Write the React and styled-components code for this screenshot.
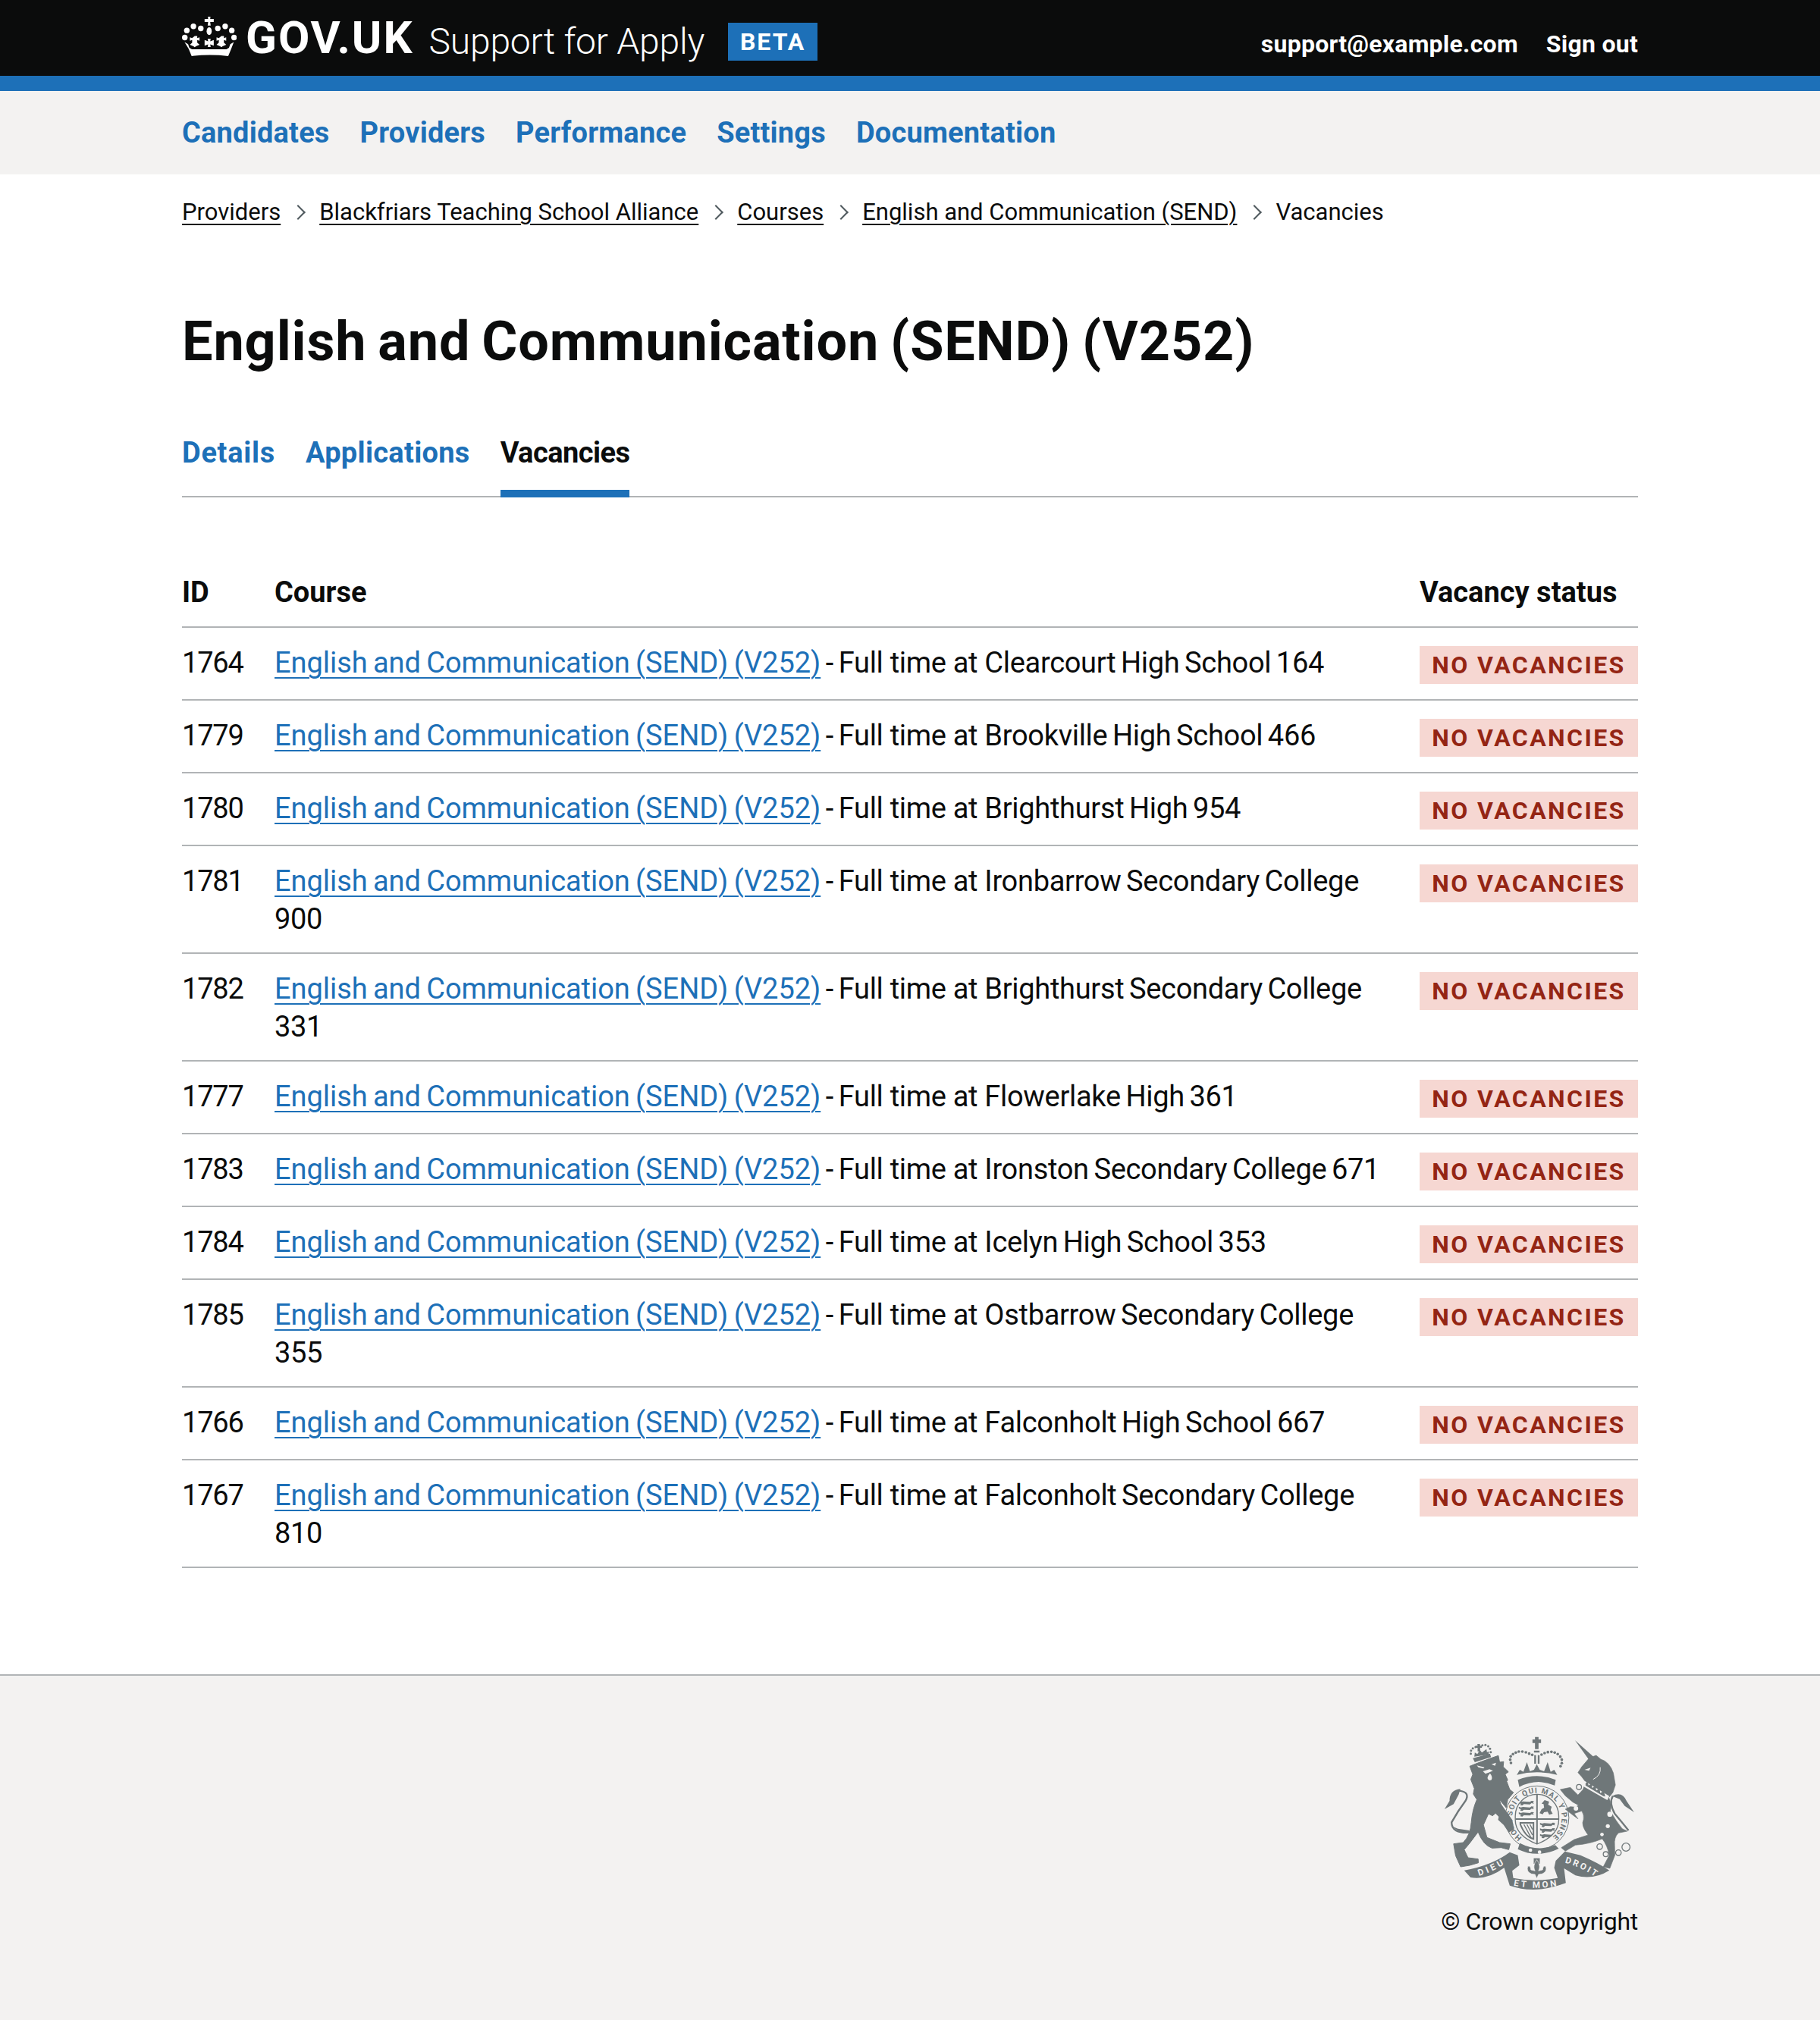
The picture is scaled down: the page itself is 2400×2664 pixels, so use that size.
import React from "react";
import styled, { createGlobalStyle } from "styled-components";

const FONT = `Roboto, "Liberation Sans", Arial, sans-serif`;
const CREST = "#6f7779";
const PAPER = "#f3f2f1";

const GlobalStyle = createGlobalStyle`
  html, body { margin: 0; padding: 0; background: #fff; }
  body { font-family: ${FONT}; color: #0b0c0c; }
`;

const Page = styled.div`
  min-height: 100vh;
  display: flex;
  flex-direction: column;
`;

const Container = styled.div`
  width: 1920px;
  margin: 0 auto;
`;

const Masthead = styled.header`
  background: #0b0c0c;
  border-bottom: 20px solid #1d70b8;
`;

const MastheadInner = styled(Container)`
  height: 100px;
  display: flex;
  justify-content: space-between;
  align-items: flex-start;
`;

const Brand = styled.div`
  display: flex;
  align-items: flex-start;
`;

const Crown = styled.svg`
  width: 72px;
  height: 52px;
  margin-top: 22px;
  margin-right: 12px;
  fill: #fff;
`;

const Logotype = styled.span`
  color: #fff;
  font-size: 60px;
  font-weight: 700;
  letter-spacing: 2px;
  line-height: 100px;
`;

const ServiceName = styled.span`
  color: #fff;
  font-size: 48px;
  font-weight: 300;
  letter-spacing: -0.2px;
  line-height: 100px;
  margin-left: 20px;
  margin-top: 5px;
`;

const PhaseTag = styled.strong`
  background: #1d70b8;
  color: #fff;
  font-size: 32px;
  font-weight: 700;
  letter-spacing: 2px;
  line-height: 50px;
  width: 118px;
  text-align: center;
  margin-top: 30px;
  margin-left: 31px;
`;

const AccountLinks = styled.nav`
  display: flex;
  gap: 37px;
  padding-top: 38px;
`;

const AccountLink = styled.a`
  color: #fff;
  font-size: 32px;
  font-weight: 700;
  letter-spacing: 0.25px;
  line-height: 40px;
`;

const PrimaryNav = styled.nav`
  background: #f3f2f1;
  height: 110px;
`;

const PrimaryNavInner = styled(Container)`
  display: flex;
  gap: 40px;
  height: 110px;
  align-items: center;
`;

const NavLink = styled.a`
  color: #1d70b8;
  font-size: 38px;
  font-weight: 700;
  letter-spacing: 0.2px;
  line-height: 50px;
`;

const Breadcrumbs = styled.ol`
  list-style: none;
  display: flex;
  align-items: center;
  margin: 30px 0 0;
  padding: 0;
  font-size: 31px;
  line-height: 40px;
`;

const Crumb = styled.li`
  display: flex;
  align-items: center;
`;

const CrumbLink = styled.a`
  color: #0b0c0c;
  text-decoration: underline;
  text-decoration-thickness: 2px;
  text-underline-offset: 5px;
`;

const Chevron = styled.span`
  width: 12px;
  height: 12px;
  border-top: 2px solid #505a5f;
  border-right: 2px solid #505a5f;
  transform: rotate(45deg);
  margin: 0 21px 0 16px;
`;

const Heading = styled.h1`
  margin: 111px 0 0;
  font-size: 72px;
  font-weight: 700;
  letter-spacing: 0.88px;
  word-spacing: -4px;
  line-height: 80px;
`;

const Tabs = styled.div`
  display: flex;
  gap: 40px;
  margin-top: 81px;
  border-bottom: 2px solid #b1b4b6;
  height: 82px;
`;

const Tab = styled.a`
  font-size: 38px;
  font-weight: 700;
  line-height: 50px;
  letter-spacing: ${(p) => p.$spacing};
  height: 74px;
  color: ${(p) => (p.$active ? "#0b0c0c" : "#1d70b8")};
  border-bottom: 10px solid ${(p) => (p.$active ? "#1d70b8" : "transparent")};
`;

const Table = styled.table`
  width: 100%;
  table-layout: fixed;
  border-collapse: collapse;
  margin-top: 80px;
  margin-bottom: 140px;
  font-size: 38px;
  line-height: 50px;
`;

const Th = styled.th`
  text-align: left;
  font-weight: 700;
  padding: 20px 0;
  border-bottom: 2px solid #b1b4b6;
  width: ${(p) => p.$width};
`;

const Td = styled.td`
  vertical-align: top;
  padding: 21px 40px 19px 0;
  border-bottom: 2px solid #b1b4b6;
  letter-spacing: -0.3px;
  word-spacing: -2.5px;
`;

const IdCell = styled(Td)`
  letter-spacing: -1.2px;
`;

const StatusCell = styled(Td)`
  padding: 20px 0;
`;

const CourseLink = styled.a`
  color: #1d70b8;
  letter-spacing: -0.05px;
  word-spacing: -2px;
  text-decoration: underline;
  text-decoration-thickness: 2px;
  text-underline-offset: 6px;
`;

const LeadIn = styled.span`
  word-spacing: 0;
`;

const StatusTag = styled.strong`
  display: block;
  margin-top: 4px;
  background: #f6d7d2;
  color: #942514;
  font-size: 32px;
  font-weight: 700;
  letter-spacing: 2.4px;
  word-spacing: 0;
  line-height: 50px;
  height: 50px;
  text-align: center;
  text-transform: uppercase;
  white-space: nowrap;
`;

const Footer = styled.footer`
  flex: 1;
  background: #f3f2f1;
  border-top: 2px solid #b1b4b6;
  padding-top: 80px;
`;

const FooterInner = styled(Container)`
  display: flex;
  justify-content: flex-end;
`;

const Licence = styled.div`
  display: flex;
  flex-direction: column;
  align-items: center;
`;

const CrestArt = styled.svg`
  width: 252px;
  height: 204px;
  display: block;
`;

const CrestText = styled.text`
  font-family: ${FONT};
  font-weight: 700;
  font-size: ${(p) => p.$size}px;
  fill: ${(p) => (p.$dark ? CREST : PAPER)};
`;

const Copyright = styled.a`
  margin-top: 20px;
  font-size: 32px;
  letter-spacing: -0.3px;
  line-height: 40px;
  color: #0b0c0c;
  white-space: nowrap;
`;

const crumbs = [
  "Providers",
  "Blackfriars Teaching School Alliance",
  "Courses",
  "English and Communication (SEND)",
];

const rows = [
  ["1764", "Clearcourt High School 164"],
  ["1779", "Brookville High School 466"],
  ["1780", "Brighthurst High 954"],
  ["1781", "Ironbarrow Secondary College 900"],
  ["1782", "Brighthurst Secondary College 331"],
  ["1777", "Flowerlake High 361"],
  ["1783", "Ironston Secondary College 671"],
  ["1784", "Icelyn High School 353"],
  ["1785", "Ostbarrow Secondary College 355"],
  ["1766", "Falconholt High School 667"],
  ["1767", "Falconholt Secondary College 810"],
];

function CrownLogo() {
  const dots = [
    [64, 89], [90, 73], [119, 81], [186, 81], [215, 73], [241, 89], [56, 117], [250, 117],
  ];
  const crossAt = (x, y) => `M${x - 5},${y - 24} h10 v8 l9,-3 v14 l-9,-3 v10 l9,8 l-14,6 l-5,4 l-5,-4 l-14,-6 l9,-8 v-10 l-9,3 v-14 l9,3 z`;
  return (
    <Crown viewBox="45 35 215 155">
      {dots.map(([x, y]) => (
        <circle key={`${x}-${y}`} cx={x} cy={y} r="11" />
      ))}
      <path d="M147,35 h10 l-1,9 h14 v12 h-14 l2,14 h-12 l2,-14 h-14 v-12 h14 z" />
      <ellipse cx="152" cy="92" rx="10" ry="15" />
      <path d={crossAt(100, 135)} />
      <path d="M146,122 h12 l-2,10 l14,-5 v22 l-14,-5 l2,10 h-12 l2,-10 l-14,5 v-22 l14,5 z" />
      <path d={crossAt(205, 135)} />
      <path d="M55,135 l14,8 l5,14 l10,6 h136 l10,-6 l5,-14 l14,-8 l-10,26 l-12,29 q-72,-8 -144,0 l-12,-29 z" />
    </Crown>
  );
}

function PassantLions({ x, y }) {
  const one = (dy) => `M${x},${y + dy} l8,3 l8,-2 l28,2 l6,-4 l10,1 l-4,5 l4,5 l-10,-2 l-6,5 l-24,-1 l-6,5 l-8,-1 l2,-6 l-8,-3 z`;
  return (
    <>
      <path d={one(0)} />
      <path d={one(22)} />
      <path d={one(44)} />
    </>
  );
}

function RoyalArms() {
  const shield = "M352,405 A86,86 0 0 1 524,405 L524,420 Q524,482 438,516 Q352,482 352,420 Z";
  const lionCrownDots = [[176, 158], [177, 146], [184, 137], [195, 132], [222, 125], [234, 124], [245, 129], [252, 139], [255, 152]];
  const arch = [
    [335, 195], [332, 182], [334, 169], [343, 160], [354, 154], [366, 150], [380, 150], [394, 153], [407, 158], [419, 163],
    [456, 162], [468, 156], [481, 152], [495, 151], [508, 154], [520, 160], [530, 170], [536, 182], [536, 196], [531, 208],
  ];
  return (
    <CrestArt viewBox="70 90 755 612" fill={CREST}>
      <defs>
        <path id="garterText" d="M379,490 A98,98 0 1 1 497,490" />
        <path id="scrollLeft" d="M208,642 Q265,625 318,590" />
        <path id="scrollMid" d="M345,680 Q435,698 528,680" />
        <path id="scrollRight" d="M548,590 Q610,605 668,646" />
        <clipPath id="shieldClip">
          <path d={shield} />
        </clipPath>
      </defs>

      {/* lion */}
      <path
        stroke={CREST}
        strokeWidth="3"
        strokeLinejoin="round"
        d="M172,208 Q215,190 285,166 L290,192 L306,190 L304,210 L325,230 L312,240 L322,262 L318,268 L330,300 L345,312 L322,340 L316,372 L288,338 L302,378 L318,405 L300,398 L290,410 L274,394 L262,404 L246,396 L226,440 L240,490 L290,510 L332,515 L326,538 L296,530 L260,532 Q225,520 205,468 L172,512 L150,538 L165,570 L205,575 L206,590 L172,600 L136,606 L116,562 L108,515 L146,510 Q175,480 178,430 Q182,380 200,340 L186,318 L190,296 L176,260 L184,240 Z"
      />
      <path d="M172,470 Q100,475 100,430 Q125,385 155,345 Q175,310 130,305" fill="none" stroke={CREST} strokeWidth="7" />
      <path d="M135,298 Q92,302 92,345 L72,378 L108,358 L128,320 Z" />
      <path d="M100,445 L135,470 L175,475 L170,462 L125,455 Z" />
      <path d="M252,236 Q264,250 258,262 Q246,268 242,254 Q244,244 252,236 Z" fill={PAPER} />
      <path d="M224,228 L250,220 L264,226 L250,232 L234,238 Z" fill={PAPER} />
      <path d="M200,205 L230,212 L226,217 L206,212 Z M258,200 L276,194 L272,206 Z" fill={PAPER} />

      {/* lion crown */}
      <path d="M184,176 L252,158 L256,172 L192,192 Z" />
      <path d="M190,170 L192,154 L202,160 L212,144 L220,154 L238,140 L240,152 L248,150 L246,162 Z" />
      <path d="M202,120 h10 l1,7 h7 v8 h-7 v14 h-10 v-14 h-7 v-8 h7 z" />
      {lionCrownDots.map(([x, y]) => (
        <circle key={`${x}-${y}`} cx={x} cy={y} r="4.5" />
      ))}

      {/* royal crown */}
      <path d="M430,92 h14 v10 h10 v14 h-10 v24 h-14 v-24 h-10 v-14 h10 z" />
      <path d="M426,146 h22 v8 h-22 z M427,164 h7 v34 h-7 z M441,164 h7 v34 h-7 z" />
      {arch.map(([x, y]) => (
        <circle key={`${x}-${y}`} cx={x} cy={y} r="5.5" />
      ))}
      <path d="M358,242 L370,222 L384,230 L398,192 L410,228 L426,222 L437,200 L449,222 L466,228 L480,192 L492,230 L506,222 L518,242 Q438,222 358,242 Z" />
      <path d="M362,262 Q438,232 512,262 L508,284 Q438,254 368,290 Z" />

      {/* garter and shield */}
      <circle cx="438" cy="412" r="126" fill={PAPER} stroke={CREST} strokeWidth="3" />
      <CrestText $size={30} $dark>
        <textPath href="#garterText" textLength="485">HONI SOIT QUI MAL Y PENSE</textPath>
      </CrestText>
      <path d={shield} fill={PAPER} stroke={CREST} strokeWidth="4" />
      <g clipPath="url(#shieldClip)">
        <path d="M435,320 h6 v198 h-6 z M352,414 h174 v6 h-174 z" />
        <PassantLions x={366} y={346} />
        <path d="M468,342 l18,6 l-4,12 l14,8 l-4,14 l8,14 l-14,4 l-6,-12 l-14,2 l-6,8 l-12,-4 l8,-16 l10,-6 l-2,-14 l-8,-2 z" />
        <path d="M372,432 L424,432 L424,496 Q392,488 372,438 Z" fill="none" stroke={CREST} strokeWidth="6" />
        <path d="M386,438 L414,490 M398,438 L420,480 M410,438 L420,458" stroke={CREST} strokeWidth="4" fill="none" />
        <PassantLions x={450} y={432} />
      </g>

      {/* lion's forepaw lies over the garter */}
      <path d="M296,358 L340,420 L348,458 L326,470 L306,440 L284,420 Z" />

      {/* unicorn */}
      <path d="M588,105 L668,176 L646,186 Z" />
      <path
        stroke={CREST}
        strokeWidth="2"
        strokeLinejoin="round"
        d="M645,175 L672,165 L690,180 Q725,190 740,235 L748,282 L738,312 L722,332 Q735,360 728,385 Q750,425 775,455 L795,465 L760,472 Q742,490 745,520 L746,560 L726,612 L700,606 L724,560 Q716,520 696,495 Q650,515 590,520 L550,544 L534,530 L585,498 L640,480 Q610,440 622,420 Q625,400 615,385 L585,395 L600,416 L578,400 L550,378 L570,368 L590,370 L602,362 L580,350 L550,325 L530,300 L570,292 L600,322 L620,300 L630,270 L615,250 L600,233 L615,210 Z"
      />
      <path d="M626,222 L650,214 L644,226 Z" fill={PAPER} />
      <path d="M688,212 Q692,244 660,260" fill="none" stroke={PAPER} strokeWidth="3" />
      <path d="M626,266 L724,326 L716,342 L618,286 Z" fill={PAPER} />
      <path d="M630,276 L638,268 L642,284 L654,276 L656,294 L670,286 L672,304 L686,296 L688,314 L702,306 L708,328 L700,326 L630,284 Z" />
      <path d="M738,326 Q722,352 745,395 Q775,430 800,462" fill="none" stroke={CREST} strokeWidth="7" />
      <path d="M735,326 Q775,305 792,345 L822,390 L785,365 L765,338 Z" />
      <circle cx="604" cy="290" r="10" fill={PAPER} stroke={CREST} strokeWidth="4" />
      <circle cx="592" cy="375" r="9" fill={PAPER} />
      <circle cx="726" cy="398" r="10" fill={PAPER} />
      <circle cx="718" cy="445" r="8" fill={PAPER} />
      <circle cx="695" cy="478" r="7" fill={PAPER} />
      <g fill="none" stroke={CREST} strokeWidth="4">
        <circle cx="686" cy="526" r="11" />
        <circle cx="710" cy="556" r="10" />
        <circle cx="760" cy="550" r="11" />
        <circle cx="790" cy="528" r="16" />
      </g>

      {/* garter belt under the shield */}
      <path d="M370,512 Q440,548 510,520 L524,534 Q440,574 362,536 Z" />
      <circle cx="412" cy="540" r="7" fill={PAPER} />
      <circle cx="448" cy="548" r="7" fill={PAPER} />

      {/* motto scroll */}
      <path d="M150,620 Q260,600 330,548 L362,560 L368,600 L340,622 L344,650 Q430,668 520,650 L506,610 L512,582 L548,545 L610,560 Q680,590 724,620 Q660,660 590,640 L545,612 L552,670 Q430,716 330,680 L308,610 Q240,660 175,648 Z" />
      <CrestText $size={35}>
        <textPath href="#scrollLeft" textLength="110">DIEU</textPath>
      </CrestText>
      <CrestText $size={35}>
        <textPath href="#scrollMid" textLength="172">ET MON</textPath>
      </CrestText>
      <CrestText $size={35}>
        <textPath href="#scrollRight" textLength="132">DROIT</textPath>
      </CrestText>

      {/* fleur */}
      <path d="M425,572 h24 v22 h-24 z" />
      <path stroke={PAPER} strokeWidth="2" d="M437,578 Q455,600 444,622 L460,618 Q462,600 472,604 Q480,625 458,634 L444,636 L437,652 L430,636 L416,634 Q394,625 402,604 Q412,600 414,618 L430,622 Q419,600 437,578 Z" />
    </CrestArt>
  );
}

export default function App() {
  return (
    <Page>
      <GlobalStyle />
      <Masthead>
        <MastheadInner>
          <Brand>
            <CrownLogo />
            <Logotype>GOV.UK</Logotype>
            <ServiceName>Support for Apply</ServiceName>
            <PhaseTag>BETA</PhaseTag>
          </Brand>
          <AccountLinks>
            <AccountLink>support@example.com</AccountLink>
            <AccountLink>Sign out</AccountLink>
          </AccountLinks>
        </MastheadInner>
      </Masthead>

      <PrimaryNav>
        <PrimaryNavInner>
          <NavLink>Candidates</NavLink>
          <NavLink>Providers</NavLink>
          <NavLink>Performance</NavLink>
          <NavLink>Settings</NavLink>
          <NavLink>Documentation</NavLink>
        </PrimaryNavInner>
      </PrimaryNav>

      <Container>
        <Breadcrumbs>
          {crumbs.map((c) => (
            <Crumb key={c}>
              <CrumbLink>{c}</CrumbLink>
              <Chevron />
            </Crumb>
          ))}
          <Crumb>Vacancies</Crumb>
        </Breadcrumbs>

        <Heading>English and Communication (SEND) (V252)</Heading>

        <Tabs>
          <Tab $spacing="0.7px">Details</Tab>
          <Tab $spacing="0.3px">Applications</Tab>
          <Tab $spacing="-0.55px" $active>Vacancies</Tab>
        </Tabs>

        <Table>
          <thead>
            <tr>
              <Th $width="122px">ID</Th>
              <Th>Course</Th>
              <Th $width="288px">Vacancy status</Th>
            </tr>
          </thead>
          <tbody>
            {rows.map(([id, school]) => (
              <tr key={id}>
                <IdCell>{id}</IdCell>
                <Td>
                  <CourseLink>English and Communication (SEND) (V252)</CourseLink> - <LeadIn>Full time at </LeadIn>{school}
                </Td>
                <StatusCell>
                  <StatusTag>No vacancies</StatusTag>
                </StatusCell>
              </tr>
            ))}
          </tbody>
        </Table>
      </Container>

      <Footer>
        <FooterInner>
          <Licence>
            <RoyalArms />
            <Copyright>© Crown copyright</Copyright>
          </Licence>
        </FooterInner>
      </Footer>
    </Page>
  );
}
